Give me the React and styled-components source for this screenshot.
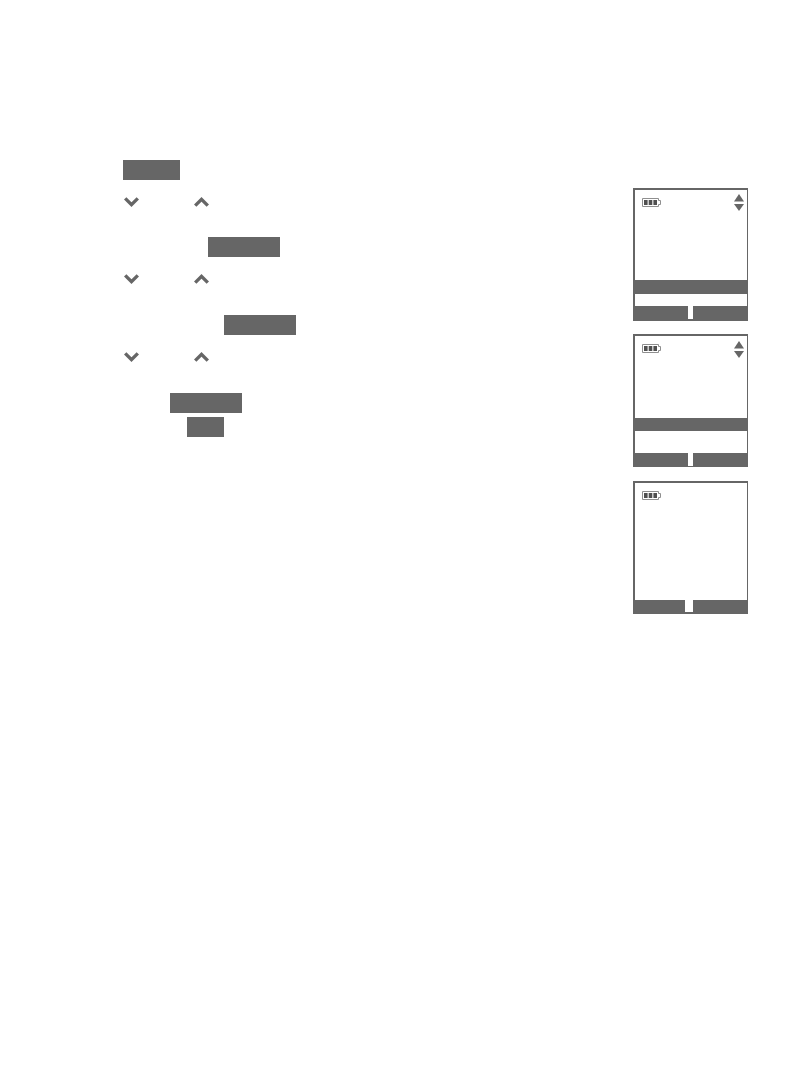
import React from 'react';
import styled, { createGlobalStyle } from 'styled-components';

const GRAY = '#666666';

function Chevron({ up }) {
  return (
    <svg width="15" height="10" viewBox="0 0 15 10">
      <polyline
        points={up ? '1.2,8.6 7.5,2.4 13.8,8.6' : '1.2,1.4 7.5,7.6 13.8,1.4'}
        fill="none"
        stroke={GRAY}
        strokeWidth="3.4"
      />
    </svg>
  );
}

function Battery() {
  return (
    <svg width="19" height="9" viewBox="0 0 19 9">
      <path d="M16.5 .5H.5v8h16V6.5h2v-4h-2z" fill="none" stroke="#8f8f8f" strokeWidth="1" />
      <rect x="2" y="2" width="3.6" height="5" fill="#505050" />
      <rect x="6.7" y="2" width="3.6" height="5" fill="#505050" />
      <rect x="11.4" y="2" width="3.6" height="5" fill="#505050" />
    </svg>
  );
}

function ScrollArrows() {
  return (
    <svg width="10" height="17" viewBox="0 0 10 17">
      <polygon points="5,0 10,7.5 0,7.5" fill={GRAY} />
      <polygon points="0,10 10,10 5,17" fill={GRAY} />
    </svg>
  );
}

function ChevronPair({ top }) {
  return (
    <ChevronRow $top={top}>
      <Chevron />
      <Chevron up />
    </ChevronRow>
  );
}

function Phone({ top, pad, arrows, bandHeight, bandGap, keyHeight, bottom, leftWidth }) {
  return (
    <Screen $top={top} $bottom={bottom}>
      <StatusRow $pad={pad}>
        <Battery />
        {arrows && <ScrollArrows />}
      </StatusRow>
      {bandHeight && <Band $height={bandHeight} />}
      {bandHeight && <BandGap $height={bandGap} />}
      <SoftKeys $height={keyHeight}>
        <SoftKey $width={leftWidth} />
        <SoftKey $width={54} />
      </SoftKeys>
    </Screen>
  );
}

function App() {
  return (
    <>
      <GlobalStyle />
      <Page>
        <Steps>
          <Key $left={123} $width={57} $top={0} />
          <ChevronPair top={17} />
          <Key $left={208} $width={72} $top={30} />
          <ChevronPair top={17} />
          <Key $left={224} $width={72} $top={31} />
          <ChevronPair top={17} />
          <Key $left={170} $width={72} $top={31} />
          <Key $left={187} $width={37} $top={4} />
        </Steps>
        <Screens>
          <Phone top={0} pad={4} arrows bandHeight={14} bandGap={12} keyHeight={13} bottom={2} leftWidth={53} />
          <Phone top={13} pad={5} arrows bandHeight={13} bandGap={22} keyHeight={13} bottom={1} leftWidth={53} />
          <Phone top={14} pad={8} keyHeight={12} bottom={2} leftWidth={50} />
        </Screens>
      </Page>
    </>
  );
}

const GlobalStyle = createGlobalStyle`
  html, body {
    margin: 0;
    padding: 0;
    background: #ffffff;
    font-family: "Liberation Sans", Arial, sans-serif;
  }
`;

const Page = styled.div`
  display: flex;
  justify-content: space-between;
  align-items: flex-start;
  min-height: 1077px;
  padding-right: 46px;
  box-sizing: border-box;
`;

const Steps = styled.div`
  display: flex;
  flex-direction: column;
  align-items: flex-start;
  padding-top: 160px;
`;

const Key = styled.div`
  width: ${(p) => p.$width}px;
  height: 20px;
  margin-top: ${(p) => p.$top}px;
  margin-left: ${(p) => p.$left}px;
  background: ${GRAY};
`;

const ChevronRow = styled.div`
  display: flex;
  gap: 55px;
  height: 10px;
  margin-top: ${(p) => p.$top}px;
  margin-left: 124px;
  svg {
    display: block;
  }
`;

const Screens = styled.div`
  display: flex;
  flex-direction: column;
  padding-top: 188px;
`;

const Screen = styled.div`
  display: flex;
  flex-direction: column;
  box-sizing: border-box;
  width: 115px;
  height: 133px;
  margin-top: ${(p) => p.$top}px;
  border-style: solid;
  border-color: ${GRAY};
  border-width: 2px 1px ${(p) => p.$bottom}px 2px;
  background: #ffffff;
`;

const StatusRow = styled.div`
  display: flex;
  justify-content: space-between;
  align-items: flex-start;
  margin-bottom: auto;
  padding: ${(p) => p.$pad}px 3px 0 7px;
  svg {
    display: block;
  }
  svg:first-child {
    margin-top: ${(p) => 8 - p.$pad}px;
  }
`;

const Band = styled.div`
  height: ${(p) => p.$height}px;
  background: ${GRAY};
`;

const BandGap = styled.div`
  height: ${(p) => p.$height}px;
`;

const SoftKeys = styled.div`
  display: flex;
  justify-content: space-between;
  height: ${(p) => p.$height}px;
`;

const SoftKey = styled.div`
  width: ${(p) => p.$width}px;
  background: ${GRAY};
`;

export default App;
